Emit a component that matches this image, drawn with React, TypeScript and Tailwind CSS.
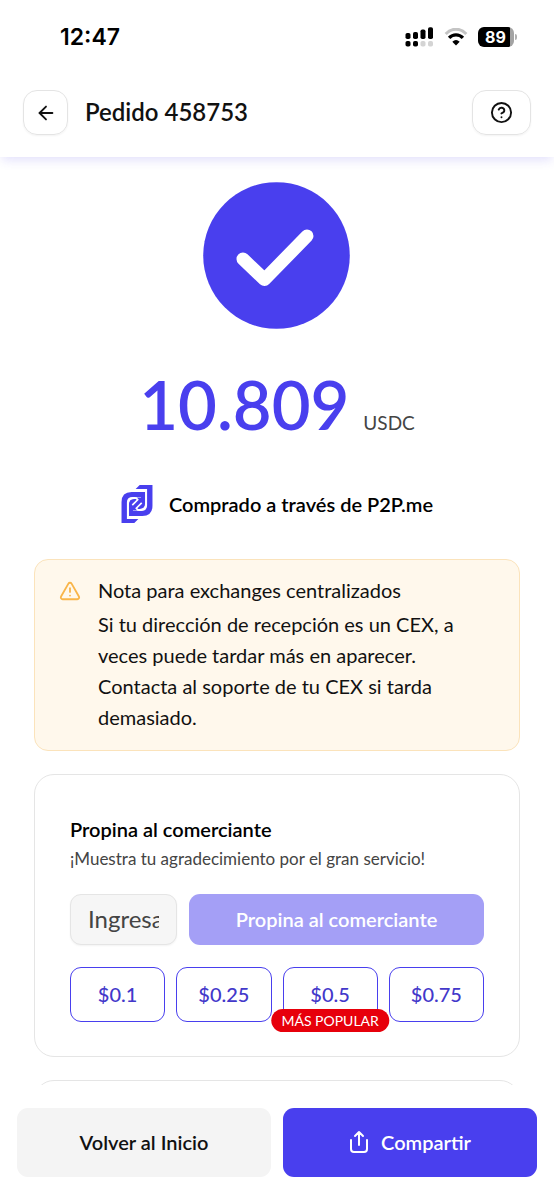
import { ArrowLeft, CircleHelp, TriangleAlert } from "lucide-react";

const tips = ["$0.1", "$0.25", "$0.5", "$0.75"];

function StatusBar() {
  return (
    <div className="flex h-[74px] items-center justify-between pr-[37px] pl-[60px] text-black">
      <time className="font-['Inter',sans-serif] text-[23px] font-semibold">12:47</time>
      <div className="flex items-center gap-[10px]">
        <svg width="29" height="20" viewBox="0 0 29 20" aria-label="Señal">
          <rect x="0.5" y="6" width="5" height="6" rx="1.8" />
          <rect x="8" y="5" width="5" height="7" rx="1.8" />
          <rect x="15.5" y="2.5" width="5" height="9.5" rx="1.8" />
          <rect x="23" y="0.3" width="5" height="11.7" rx="1.8" />
          <rect x="0.5" y="14" width="5" height="5.5" rx="1.8" />
          <rect x="8" y="14" width="5" height="5.5" rx="1.8" />
          <rect x="15.5" y="14" width="5" height="5.5" rx="1.8" fill="#d4d4d4" />
          <rect x="23" y="14" width="5" height="5.5" rx="1.8" fill="#d4d4d4" />
        </svg>
        <svg width="24" height="18" viewBox="0 0 23 18" fill="none" aria-label="Wifi">
          <path d="M1.2 6C7 -0.4 16 -0.4 21.8 6" stroke="#c4c4c4" strokeWidth="3" />
          <path d="M4.6 9.9C8.5 5.9 14.5 5.9 18.4 9.9" stroke="#000" strokeWidth="3.4" />
          <path d="M7.8 13.7Q11.5 10.4 15.2 13.7L11.5 17.4Z" fill="#000" />
        </svg>
        <div className="flex items-center gap-px">
          <div className="flex h-5 w-9 items-center justify-center rounded-[6px] bg-linear-to-r from-black from-90% to-[#a3a3a3] to-90% pr-px font-['Inter',sans-serif] text-[16px] font-bold text-white">
            89
          </div>
          <div className="h-[6px] w-[2px] rounded-r-full bg-[#b0b0b0]" />
        </div>
      </div>
    </div>
  );
}

function BrandMark() {
  return (
    <svg width="32" height="38" viewBox="0 0 92 113" fill="#493fee" aria-hidden="true">
      <path d="M42 12L54 0H92V62Q92 92 62 92H22V58Q22 42 38 42H46L41 37H64V58L57 51L34 74V77H58Q76 77 76 61V12Z" />
      <path d="M50 101L38 113H0V51Q0 21 30 21H70V55Q70 71 54 71H46L51 76H28V55L35 62L58 39V36H34Q16 36 16 52V101Z" />
      <path d="M19 101V57Q19 39 37 39H44L48 44L32 60M73 12V56Q73 74 55 74H48L44 69L60 53" fill="none" stroke="#fff" strokeWidth="5" />
    </svg>
  );
}

function ShareIcon() {
  return (
    <svg width="20" height="24" viewBox="0 0 20 24" fill="none" stroke="currentColor" strokeWidth="2" strokeLinecap="round" strokeLinejoin="round" aria-hidden="true">
      <path d="M2 10V19Q2 22 5 22H15Q18 22 18 19V10M10 15V3M6 6L10 2L14 6" />
    </svg>
  );
}

export default function App() {
  return (
    <div className="flex h-screen flex-col bg-white font-['Lato',sans-serif] text-[#111111]">
      <header className="z-10 shrink-0 bg-white pb-[22px] shadow-[0_5px_10px_-2px_rgba(73,63,238,0.16)]">
        <StatusBar />
        <div className="flex items-center px-[23px] pt-4">
          <button aria-label="Volver" className="flex size-[45px] items-center justify-center rounded-[14px] border border-[#e4e4e4] shadow-xs">
            <ArrowLeft size={22} strokeWidth={2} />
          </button>
          <h1 className="ml-[17px] flex-1 pb-[2px] text-[24px] font-semibold">Pedido 458753</h1>
          <button aria-label="Ayuda" className="flex h-[45px] w-[59px] items-center justify-center rounded-[14px] border border-[#e4e4e4] shadow-xs">
            <CircleHelp size={23} strokeWidth={2} />
          </button>
        </div>
      </header>

      <main className="min-h-0 flex-1 overflow-y-auto px-[34px] pt-[25px] [scrollbar-width:none]">
        <svg className="mx-auto" width="148" height="148" viewBox="0 0 148 148" role="img" aria-label="Completado">
          <circle cx="73.5" cy="73.5" r="73.3" fill="#493fee" />
          <path d="M40 77L61.5 97.5L104 54" fill="none" stroke="#fff" strokeWidth="13" strokeLinecap="round" strokeLinejoin="round" />
        </svg>

        <p className="mt-[30px] flex items-baseline justify-center gap-[14px]">
          <span className="text-[67px] leading-[88px] font-semibold text-[#493fee]">10.809</span>
          <span className="text-[19px] text-[#444444]">USDC</span>
        </p>

        <div className="mt-[37px] flex h-[38px] items-center justify-center gap-4">
          <BrandMark />
          <p className="text-[20px] font-semibold text-black">Comprado a través de P2P.me</p>
        </div>

        <section className="mt-9 flex gap-[17px] rounded-[14px] border border-[#fbe3bb] bg-[#fff8ec] px-6 pt-[15px] pb-[17px]">
          <TriangleAlert className="mt-[5px] shrink-0 text-[#f9b549]" size={22} strokeWidth={2} />
          <div className="text-[20px] leading-[31px]">
            <h2 className="pb-[3px]">Nota para exchanges centralizados</h2>
            <p>Si tu dirección de recepción es un CEX, a veces puede tardar más en aparecer. Contacta al soporte de tu CEX si tarda demasiado.</p>
          </div>
        </section>

        <section className="mt-[23px] rounded-[20px] border border-[#e5e5e5] px-[35px] pt-10 pb-[34px]">
          <h2 className="text-[20px] leading-7 font-semibold text-black">Propina al comerciante</h2>
          <p className="pt-px text-[17px] leading-[30px] text-[#444444]">¡Muestra tu agradecimiento por el gran servicio!</p>
          <div className="mt-5 flex gap-3">
            <input
              aria-label="Ingresa la propina"
              placeholder="Ingresa"
              className="h-[51px] w-[107px] rounded-[11px] border border-[#e5e5e5] bg-[#f6f6f6] px-[17px] pb-[3px] text-[24px] shadow-xs placeholder:text-[#444444]"
            />
            <button className="h-[51px] flex-1 rounded-[11px] bg-[#a49ff6] pb-[2px] text-[20px] font-semibold text-white">Propina al comerciante</button>
          </div>
          <div className="mt-[22px] grid grid-cols-4 gap-[11px]">
            {tips.map((tip) => (
              <button key={tip} className="relative h-[55px] rounded-[11px] border border-[#493fee] pb-[2px] text-[20px] font-medium text-[#4338ca]">
                {tip}
                {tip === "$0.5" && (
                  <span className="absolute -bottom-[11px] left-1/2 -translate-x-1/2 rounded-full bg-[#e7000b] px-[10px] text-[14px] leading-[23px] font-normal whitespace-nowrap text-white">
                    MÁS POPULAR
                  </span>
                )}
              </button>
            ))}
          </div>
        </section>

        <section className="mt-[23px] h-28 rounded-[20px] border border-[#e5e5e5]" />
      </main>

      <footer className="grid shrink-0 grid-cols-2 gap-3 bg-white px-[17px] pt-[23px] pb-[22px]">
        <button className="h-[69px] rounded-[11px] bg-[#f4f4f4] pb-[2px] text-[20px] font-semibold">Volver al Inicio</button>
        <button className="flex h-[69px] items-center justify-center gap-3 rounded-[11px] bg-[#493fee] pb-[2px] text-[20px] font-semibold text-white">
          <ShareIcon />
          Compartir
        </button>
      </footer>
    </div>
  );
}
